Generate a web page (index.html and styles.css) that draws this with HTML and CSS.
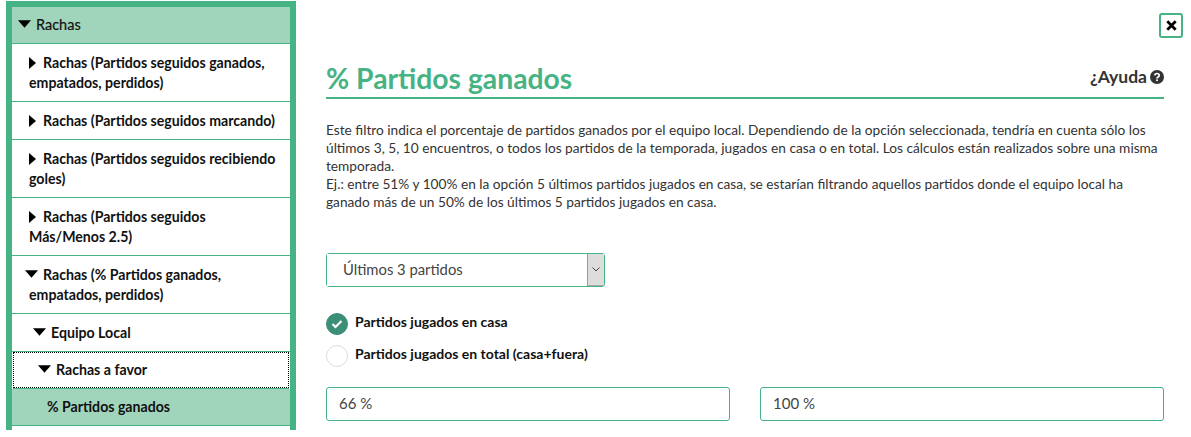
FILE: index.html
```html
<!DOCTYPE html>
<html lang="es">
<head>
    <meta charset="UTF-8">
    <meta name="viewport" content="width=device-width, initial-scale=1.0">
    <title>% Partidos ganados</title>
    <link rel="stylesheet" href="styles.css">
</head>
<body>
    <div class="sidebar">
        <div class="item head"><svg class="caret" viewBox="0 0 12 7"><path d="M0 0h12L6 7z"/></svg>Rachas</div>
        <div class="item lvl1"><svg class="caret-r" viewBox="0 0 7 12"><path d="M0 0v12l7-6z"/></svg>Rachas (Partidos seguidos ganados, empatados, perdidos)</div>
        <div class="item lvl1"><svg class="caret-r" viewBox="0 0 7 12"><path d="M0 0v12l7-6z"/></svg>Rachas (Partidos seguidos marcando)</div>
        <div class="item lvl1"><svg class="caret-r" viewBox="0 0 7 12"><path d="M0 0v12l7-6z"/></svg>Rachas (Partidos seguidos recibiendo goles)</div>
        <div class="item lvl1"><svg class="caret-r" viewBox="0 0 7 12"><path d="M0 0v12l7-6z"/></svg>Rachas (Partidos seguidos<br>Más/Menos 2.5)</div>
        <div class="item lvl1 open"><svg class="caret" viewBox="0 0 12 7"><path d="M0 0h12L6 7z"/></svg>Rachas (% Partidos ganados, empatados, perdidos)</div>
        <div class="item lvl2"><svg class="caret" viewBox="0 0 12 7"><path d="M0 0h12L6 7z"/></svg>Equipo Local</div>
        <div class="item lvl3"><svg class="caret" viewBox="0 0 12 7"><path d="M0 0h12L6 7z"/></svg>Rachas a favor</div>
        <div class="item lvl4 selected">% Partidos ganados</div>
        <div class="item"></div>
    </div>

    <div class="main">
        <div class="close-row">
            <button class="close-btn"><svg viewBox="0 0 10 10"><path d="M1.200 1.200l7.600 7.600M8.800 1.200l-7.600 7.600"/></svg></button>
        </div>
        <div class="title-row">
            <h1>% Partidos ganados</h1>
            <span class="help">¿Ayuda <svg viewBox="0 0 14 14"><circle cx="7" cy="7" r="7" fill="#333"/><path d="M4.800 5.400C4.900 4.200 5.800 3.500 7 3.500c1.300 0 2.200.8 2.200 1.900 0 1.600-2.200 1.600-2.200 3.100" fill="none" stroke="#fff" stroke-width="1.700"/><rect x="6.100" y="9.400" width="1.800" height="1.700" fill="#fff"/></svg></span>
        </div>
        <p class="desc">Este filtro indica el porcentaje de partidos ganados por el equipo local. Dependiendo de la opción seleccionada, tendría en cuenta sólo los últimos 3, 5, 10 encuentros, o todos los partidos de la temporada, jugados en casa o en total. Los cálculos están realizados sobre una misma temporada.<br>Ej.: entre 51% y 100% en la opción 5 últimos partidos jugados en casa, se estarían filtrando aquellos partidos donde el equipo local ha ganado más de un 50% de los últimos 5 partidos jugados en casa.</p>

        <div class="select-box">
            <select>
                <option>Últimos 3 partidos</option>
            </select>
            <span class="select-arrow"><svg viewBox="0 0 8 5"><path d="M.5 .5L4 4 7.500 .5"/></svg></span>
        </div>

        <div class="radios">
            <label class="radio on"><span class="dot"><svg viewBox="0 0 12 10"><path d="M1.500 5l3 3 6-6"/></svg></span>Partidos jugados en casa</label>
            <label class="radio"><span class="dot"></span>Partidos jugados en total (casa+fuera)</label>
        </div>

        <div class="range">
            <input type="text" value="66 %">
            <input type="text" value="100 %">
        </div>
    </div>
</body>
</html>
```

FILE: styles.css
```css
body {
    margin: 0;
    height: 437px;
    overflow: hidden;
    display: flex;
    align-items: flex-start;
    background: #fff;
    color: #333;
    font-family: "Lato", sans-serif;
}

.sidebar {
    box-sizing: border-box;
    width: 290px;
    height: 429px;
    margin: 1px 0 0 6px;
    overflow: hidden;
    flex-shrink: 0;
    border: 6px solid #46b384;
    border-bottom: none;
}

.item {
    padding: 8.500px 8px 8.500px 17px;
    border-bottom: 1px solid #46b384;
    font-size: 14.150px;
    font-weight: 700;
    line-height: 20px;
    color: #111;
}

.head {
    padding: 8px 6px;
    background: #a1d5bb;
    font-size: 14.500px;
    font-weight: 400;
    -webkit-text-stroke: .2px #111;
}

.selected {
    background: #a1d5bb;
    padding-top: 8px;
    padding-bottom: 8px;
}

.lvl2 {
    padding-left: 21px;
}

.lvl3 {
    padding: 7px 24px;
    border: 1px dotted #000;
    margin: 0 1px 1px;
    box-shadow: 0 1px 0 #46b384;
}

.lvl4 {
    padding-left: 35px;
}

.open {
    text-indent: -4px;
}

.caret {
    width: 13px;
    height: 8px;
    margin-right: 5px;
    vertical-align: 2px;
}

.caret-r {
    width: 7px;
    height: 12px;
    margin-right: 7px;
    vertical-align: -1px;
}

.main {
    flex: 1;
    padding: 13px 8px 0 30px;
}

.close-row {
    display: flex;
    justify-content: flex-end;
}

.close-btn {
    box-sizing: border-box;
    width: 24px;
    height: 25px;
    padding: 0;
    background: #fff;
    border: 2px solid #46b384;
    border-radius: 3px;
    display: flex;
    align-items: center;
    justify-content: center;
}

.close-btn svg {
    width: 11px;
    height: 11px;
}

.close-btn path {
    stroke: #000;
    stroke-width: 2.500;
    fill: none;
}

.title-row {
    margin: 21px 19px 0 0;
    height: 38px;
    border-bottom: 2px solid #46b384;
    display: flex;
    justify-content: space-between;
    align-items: center;
}

h1 {
    margin: 0;
    font-size: 28.300px;
    font-weight: 700;
    color: #46b384;
}

.help {
    font-size: 17.500px;
    font-weight: 700;
    display: flex;
    align-items: center;
    gap: 3px;
    margin-bottom: 3px;
}

.help svg {
    width: 14px;
    height: 14px;
}

.desc {
    margin: 22px 19px 0 0;
    font-size: 13.700px;
    line-height: 18px;
    color: #333;
}

.select-box {
    box-sizing: border-box;
    width: 279px;
    height: 34px;
    margin-top: 42px;
    border: 1px solid #46b384;
    border-radius: 3px;
    display: flex;
}

.select-box select {
    flex: 1;
    min-width: 0;
    padding: 0 16px 2px;
    border: none;
    background: #fff;
    appearance: none;
    font-family: inherit;
    font-size: 14.800px;
    color: #444;
}

.select-arrow {
    box-sizing: border-box;
    width: 17px;
    background: #ddd;
    border-left: 1px solid #999;
    border-bottom: 1px solid #aaa;
    display: flex;
    align-items: center;
    justify-content: center;
}

.select-arrow svg {
    width: 8px;
    height: 5px;
}

.select-arrow path {
    fill: none;
    stroke: #444;
    stroke-width: 1;
}

.radios {
    margin-top: 26px;
    display: flex;
    flex-direction: column;
    gap: 10px;
}

.radio {
    display: flex;
    align-items: flex-start;
    gap: 7px;
    height: 22px;
    font-size: 14px;
    font-weight: 700;
    line-height: 18px;
    color: #111;
}

.dot {
    box-sizing: border-box;
    width: 22px;
    height: 22px;
    border: 1px solid #ddd;
    border-radius: 50%;
    display: flex;
    align-items: center;
    justify-content: center;
}

.radio.on .dot {
    background: #3a8f76;
    border-color: #3a8f76;
}

.dot svg {
    width: 12px;
    height: 10px;
}

.dot path {
    fill: none;
    stroke: #fff;
    stroke-width: 2.200;
}

.range {
    margin: 20px 19px 0 0;
    display: flex;
    gap: 30px;
}

.range input {
    box-sizing: border-box;
    flex: 1;
    min-width: 0;
    height: 34px;
    padding: 0 12px 2px;
    border: 1px solid #46b384;
    border-radius: 3px;
    font-family: inherit;
    font-size: 15px;
    color: #444;
}
```
